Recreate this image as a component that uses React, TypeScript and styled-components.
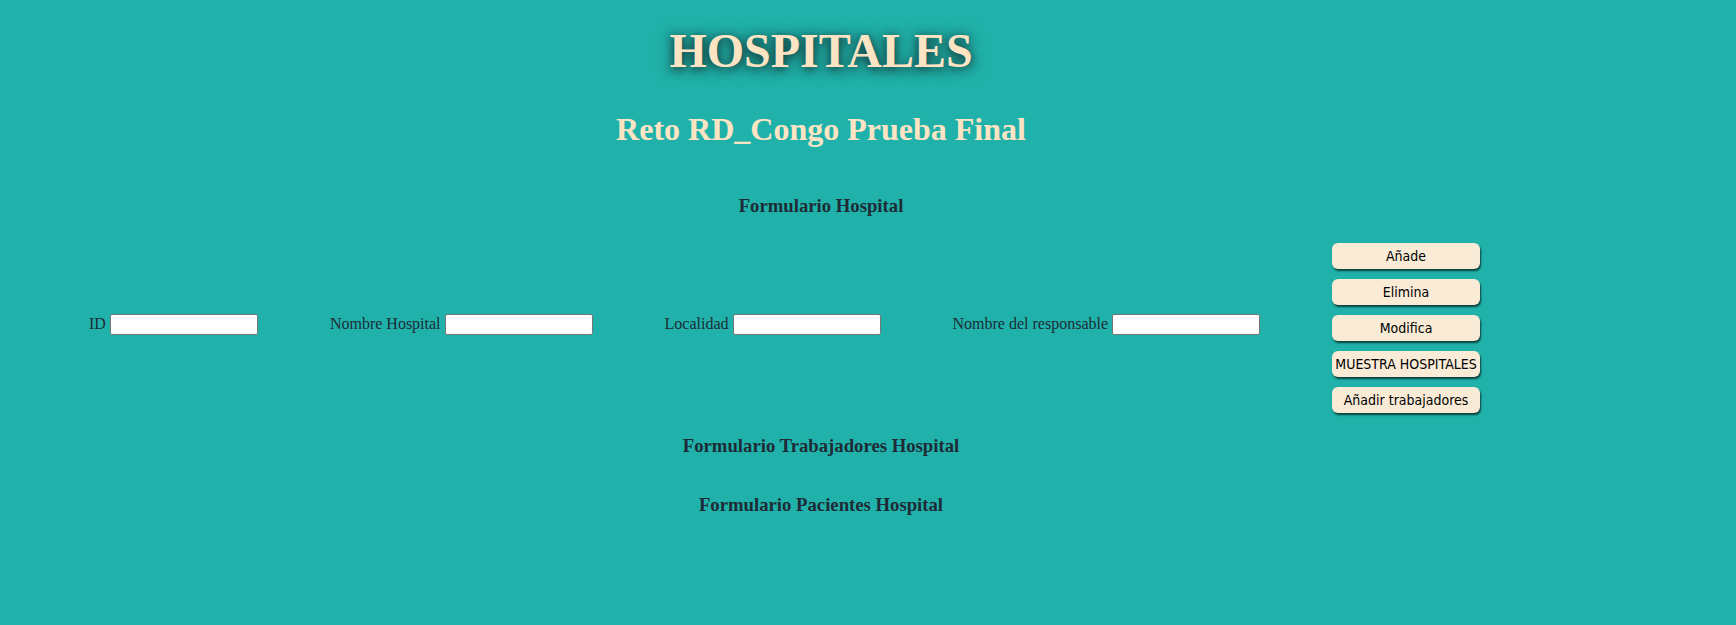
import React from "react";
import styled, { createGlobalStyle } from "styled-components";

const GlobalStyle = createGlobalStyle`
  html, body {
    margin: 0;
    padding: 0;
    background: #20b2aa;
  }
  body {
    font-family: "Liberation Serif", "Times New Roman", serif;
    color: #1e2b36;
  }
`;

const Page = styled.div`
  display: flex;
  flex-direction: column;
  min-height: 625px;
  padding-top: 23px;
  box-sizing: border-box;
`;

const Centered = styled.div`
  padding-right: 94px;
  text-align: center;
`;

const Title = styled.h1`
  margin: 0;
  font-size: 48px;
  line-height: 56px;
  font-weight: bold;
  color: #ffe4c4;
  text-shadow: 0 2px 10px rgba(20, 45, 45, 0.95), 0 2px 18px rgba(20, 45, 45, 0.6);
`;

const Subtitle = styled.h2`
  margin: 32px 0 0;
  font-size: 32px;
  line-height: 37px;
  font-weight: bold;
  color: #ffe4c4;
`;

const SectionTitle = styled.h3<{ $top: number }>`
  margin: ${(p) => p.$top}px 0 0;
  font-size: 18.72px;
  line-height: 22px;
  font-weight: bold;
  color: #1e2b36;
`;

const FormRow = styled.div`
  display: flex;
  align-items: center;
  gap: 72px;
  margin-top: 18px;
  padding-left: 89px;
`;

const Field = styled.label`
  display: flex;
  align-items: center;
  gap: 4px;
  font-size: 16px;
  line-height: 18px;
  color: #1e2b36;
`;

const TextInput = styled.input`
  width: 148px;
  height: 21px;
  box-sizing: border-box;
  border: 1px solid #767676;
  border-radius: 2px;
  background: #ffffff;
  padding: 1px 2px;
  font-size: 13px;
`;

const ButtonColumn = styled.div`
  display: flex;
  flex-direction: column;
  gap: 10px;
  padding-top: 8px;
`;

const ActionButton = styled.button`
  width: 148px;
  height: 26px;
  padding: 0;
  border: none;
  border-radius: 6px;
  background: #faebd7;
  color: #000;
  font-family: "DejaVu Sans Condensed", "DejaVu Sans", sans-serif;
  font-stretch: condensed;
  font-size: 14px;
  white-space: nowrap;
  box-shadow: 1px 2px 2px rgba(0, 0, 0, 0.65);
  cursor: pointer;
`;

const fields = ["ID", "Nombre Hospital", "Localidad", "Nombre del responsable"];
const buttons = ["Añade", "Elimina", "Modifica", "MUESTRA HOSPITALES", "Añadir trabajadores"];

export default function App() {
  return (
    <>
      <GlobalStyle />
      <Page>
        <Centered>
          <Title>HOSPITALES</Title>
          <Subtitle>Reto RD_Congo Prueba Final</Subtitle>
          <SectionTitle $top={47}>Formulario Hospital</SectionTitle>
        </Centered>
        <FormRow>
          {fields.map((f) => (
            <Field key={f}>
              {f}
              <TextInput type="text" />
            </Field>
          ))}
          <ButtonColumn>
            {buttons.map((b) => (
              <ActionButton key={b}>{b}</ActionButton>
            ))}
          </ButtonColumn>
        </FormRow>
        <Centered>
          <SectionTitle $top={22}>Formulario Trabajadores Hospital</SectionTitle>
          <SectionTitle $top={37}>Formulario Pacientes Hospital</SectionTitle>
        </Centered>
      </Page>
    </>
  );
}
